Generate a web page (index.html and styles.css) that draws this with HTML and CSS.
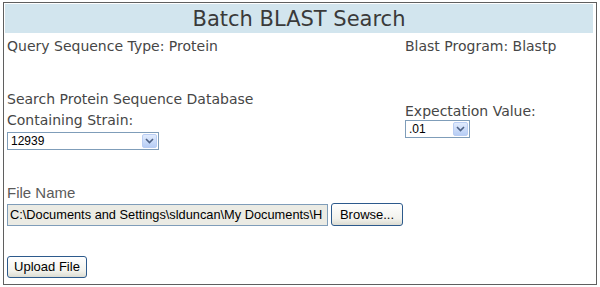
FILE: index.html
```html
<!DOCTYPE html>
<html>
<head>
<meta charset="utf-8">
<link rel="stylesheet" href="styles.css">
</head>
<body>
<div class="panel">
  <div class="header">Batch BLAST Search</div>
  <div class="row row-top">
    <div class="col-left"><span class="label">Query Sequence Type: Protein</span></div>
    <div class="col-right"><span class="label">Blast Program: Blastp</span></div>
  </div>
  <div class="row row-db">
    <div class="col-left">
      <div class="label">Search Protein Sequence Database</div>
      <div class="label">Containing Strain:</div>
      <div class="select sel-strain">
        <span class="sel-text">12939</span>
        <span class="sel-btn"><svg width="9" height="6" viewBox="0 0 9 6"><path d="M1 1 L4.5 4.5 L8 1" fill="none" stroke="#4d6185" stroke-width="1.6"/></svg></span>
      </div>
    </div>
    <div class="col-right">
      <div class="label">Expectation Value:</div>
      <div class="select sel-exp">
        <span class="sel-text">.01</span>
        <span class="sel-btn"><svg width="9" height="6" viewBox="0 0 9 6"><path d="M1 1 L4.5 4.5 L8 1" fill="none" stroke="#4d6185" stroke-width="1.6"/></svg></span>
      </div>
    </div>
  </div>
  <div class="file-block">
    <div class="file-label">File Name</div>
    <div class="file-row">
      <div class="file-input">C:\Documents and Settings\slduncan\My Documents\H</div>
      <div class="btn btn-browse">Browse...</div>
    </div>
  </div>
  <div class="upload-row">
    <div class="btn btn-upload">Upload File</div>
  </div>
</div>
</body>
</html>
```
FILE: styles.css
```css
html, body {
  margin: 0;
  padding: 0;
  background: #ffffff;
}
.panel {
  margin: 2px 0 0 3px;
  width: 588px;
  height: 280px;
  border: 1px solid #5f5f5f;
  padding: 1px 3px 0 1px;
  box-sizing: content-box;
}
.header {
  height: 29px;
  background: #d2e5ee;
  font-family: "DejaVu Sans", Tahoma, sans-serif;
  font-size: 21px;
  line-height: 30px;
  color: #3a3a3a;
  text-align: center;
}
.row {
  display: flex;
  align-items: center;
  padding-left: 2px;
}
.col-left {
  width: 398px;
  display: flex;
  flex-direction: column;
  align-items: flex-start;
}
.col-right {
  display: flex;
  flex-direction: column;
  align-items: flex-start;
}
.label {
  font-family: "DejaVu Sans", Tahoma, sans-serif;
  font-size: 14px;
  line-height: 18px;
  color: #464646;
}
.row-top {
  margin-top: 4px;
}
.row-db {
  margin-top: 34px;
}
.row-db .col-left .label {
  line-height: 21px;
}
.select {
  display: flex;
  align-items: center;
  border: 1px solid #7f9db9;
  background: #ffffff;
  box-sizing: border-box;
  height: 18px;
  padding: 1px;
  margin-top: 1px;
}
.sel-strain { width: 152px; }
.sel-exp { width: 65px; margin-top: 0; }
.sel-text {
  flex: 1;
  font-family: "Liberation Sans", Arial, sans-serif;
  font-size: 12px;
  color: #000000;
  padding-left: 2px;
}
.sel-btn {
  width: 15px;
  height: 14px;
  box-sizing: border-box;
  border: 1px solid #b9cdf3;
  border-radius: 2px;
  background: linear-gradient(#e1ebfd, #b7cdf5);
  display: flex;
  align-items: center;
  justify-content: center;
}
.file-block {
  margin-top: 34px;
  padding-left: 2px;
}
.file-label {
  font-family: "Liberation Sans", Arial, sans-serif;
  font-size: 15px;
  line-height: 18px;
  color: #5a5a5a;
}
.file-row {
  display: flex;
  align-items: center;
  margin-top: 1px;
}
.file-input {
  width: 321px;
  height: 22px;
  box-sizing: border-box;
  border: 1px solid #7f9db9;
  background: #ebebe4;
  font-family: "Liberation Sans", Arial, sans-serif;
  font-size: 12.8px;
  line-height: 20px;
  padding-left: 2px;
  white-space: nowrap;
  overflow: hidden;
  color: #000000;
}
.btn {
  box-sizing: border-box;
  border: 1px solid #2d5a8c;
  border-radius: 3px;
  background: linear-gradient(#ffffff, #f2f2ec 70%, #dcdcd2);
  font-family: "Liberation Sans", Arial, sans-serif;
  font-size: 13px;
  color: #000000;
  text-align: center;
}
.btn-browse {
  width: 72px;
  height: 23px;
  line-height: 21px;
  margin-left: 3px;
}
.upload-row {
  margin-top: 30px;
  padding-left: 2px;
}
.btn-upload {
  width: 80px;
  height: 22px;
  line-height: 20px;
}
```
